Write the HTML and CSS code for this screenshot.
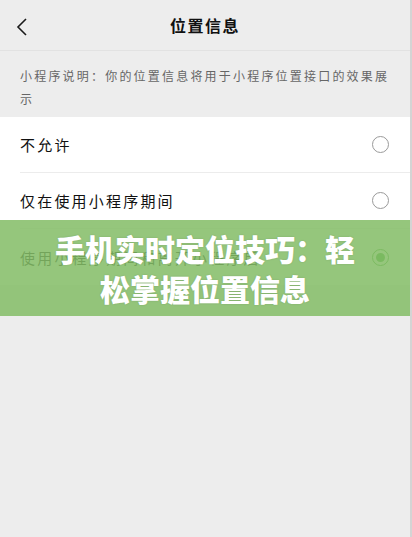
FILE: index.html
```html
<!DOCTYPE html>
<html lang="zh-CN">
<head>
<meta charset="utf-8">
<link rel="stylesheet" href="styles.css">
</head>
<body>
<div class="page">
  <header class="nav">
    <svg class="back" width="14" height="20" viewBox="0 0 14 20"><path d="M11 2 L3 10 L11 18" fill="none" stroke="#1a1a1a" stroke-width="1.6"/></svg>
    <div class="title">位置信息</div>
  </header>
  <p class="desc">小程序说明：你的位置信息将用于小程序位置接口的效果展示</p>
  <ul class="list">
    <li class="row"><span>不允许</span><span class="radio"></span></li>
    <li class="row"><span>仅在使用小程序期间</span><span class="radio"></span></li>
    <li class="row"><span>使用小程序期间和离开小程序后</span><span class="radio on"></span></li>
  </ul>
  <div class="banner"><div class="banner-text">手机实时定位技巧：轻松掌握位置信息</div></div>
</div>
</body>
</html>
```
FILE: styles.css
```css
html, body { margin: 0; padding: 0; }
body { background: #ededed; font-family: "Noto Sans CJK SC", sans-serif; }
.page { position: relative; width: 410px; height: 537px; background: #ededed; border-right: 2px solid #d4d4d4; }
.nav { height: 51px; display: flex; align-items: center; justify-content: center; position: relative; border-bottom: 1px solid #e2e2e2; box-sizing: border-box; }
.back { position: absolute; left: 15px; top: 17px; }
.title { font-size: 16px; font-weight: 700; letter-spacing: 1.5px; color: #111; }
.desc { margin: 0; padding: 13px 20px 7px; font-size: 12px; line-height: 23px; letter-spacing: 2.2px; color: #666; }
.list { list-style: none; margin: 0; padding: 0 0 0 20px; background: #fff; }
.row { height: 56px; display: flex; align-items: center; justify-content: space-between; padding-right: 21px; font-size: 15px; letter-spacing: 2.2px; color: #111; border-bottom: 1px solid #ececec; box-sizing: border-box; }
.row:last-child { border-bottom: none; }
.radio { width: 15px; height: 15px; border: 1px solid #9a9a9a; border-radius: 50%; box-sizing: content-box; position: relative; }
.radio.on { border-color: #4aa83c; }
.radio.on::after { content: ""; position: absolute; left: 3px; top: 3px; width: 9px; height: 9px; border-radius: 50%; background: #45a83a; }
.banner { position: absolute; left: 0; right: 0; top: 220px; height: 96px; background: rgba(131, 189, 102, 0.86); display: flex; align-items: center; justify-content: center; }
.banner-text { width: 310px; text-align: center; color: #fff; font-size: 30px; font-weight: 900; line-height: 40px; text-shadow: 0 0 2px rgba(0,0,0,0.15); }
```
